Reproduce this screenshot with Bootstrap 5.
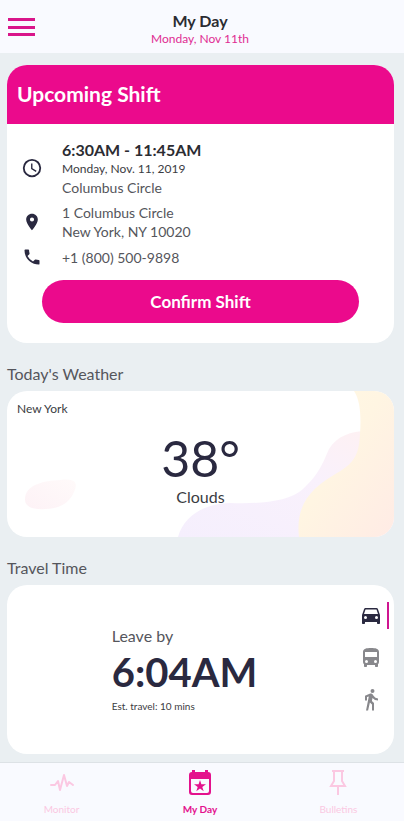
<!DOCTYPE html>
<html lang="en">
<head>
<meta charset="utf-8">
<meta name="viewport" content="width=device-width, initial-scale=1">
<title>My Day</title>
<link href="https://cdn.jsdelivr.net/npm/bootstrap@5.3.0/dist/css/bootstrap.min.css" rel="stylesheet">
<style>
:root { --pink: #eb0a8c; --ink: #2a2940; --panel: #f9faff; }
body { font-family: Lato, "Open Sans", sans-serif; background: #eaeff2; color: #55565c; font-size: 14px; line-height: 19px; }
h1, h2, p { margin: 0; font-size: inherit; line-height: inherit; }
svg { display: block; flex: none; }
.topbar { display: grid; grid-template-columns: 44px 1fr 44px; background: var(--panel); height: 53px; padding-right: 4px; }
.topbar h1 { font-size: 16px; line-height: 20px; font-weight: 700; color: #2b2c32; }
.topbar p { font-size: 12px; line-height: 16px; color: #e02c92; }
.day-title { padding-top: 11px; }
.menu-btn { padding: 0 0 0 8px; }
.content { padding: 12px 10px 8px 7px; }
.tile { border: 0; border-radius: 20px; overflow: hidden; background: #fff; }
.shift-head { background: var(--pink); padding: 19px 10px 20px; font-size: 21px; line-height: 20px; font-weight: 700; color: #fff; }
.shift-body { padding: 16px 15px 20px; gap: 6px; }
.info { display: grid; grid-template-columns: 20px 1fr; column-gap: 20px; align-items: center; color: var(--ink); }
.info > svg { justify-self: center; }
.info-text { color: #55565c; }
.hours { font-size: 16px; line-height: 20px; font-weight: 700; color: #2b2c32; }
.shift-date { font-size: 12px; line-height: 18px; color: #3b3c42; }
.confirm { margin: 7px 20px 0; height: 43px; background: var(--pink); color: #fff; border: 0; border-radius: 22px; font-size: 17px; font-weight: 700; }
.section-title { font-size: 16px; line-height: 20px; font-weight: 400; color: #55565c; margin: 21px 0 7px; }
.weather { height: 146px; }
.weather-art { position: absolute; inset: 0; width: 100%; height: 100%; }
.weather-text { position: relative; padding: 9px 10px; }
.city { font-size: 12px; line-height: 18px; color: #3b3c42; }
.temp { font-size: 50px; line-height: 60px; color: var(--ink); margin-top: 10px; }
.sky { font-size: 16px; line-height: 18px; color: #3b3c42; }
.travel { min-height: 169px; }
.leave-box { margin-right: 32px; }
.leave { font-size: 16px; line-height: 20px; }
.leave-time { font-size: 40px; line-height: 52px; font-weight: 700; color: var(--ink); }
.estimate { font-size: 10px; line-height: 16px; color: #3b3c42; }
.modes { position: absolute; top: 17px; right: 5px; gap: 15px; }
.mode { display: flex; align-items: center; padding: 0 6px 0 0; height: 27px; border: 0; border-right: 2px solid transparent; background: none; color: #88888c; }
.mode.active { border-right-color: #cf1590; color: var(--ink); }
.tabs { display: grid; grid-template-columns: 4fr 5fr 4fr; background: var(--panel); border-top: 1px solid #dde2e6; height: 59px; padding-right: 4px; }
.tab { display: flex; flex-direction: column; align-items: center; padding-top: 6px; font-size: 10px; line-height: 14px; color: #fbc8e2; text-decoration: none; }
.tab svg { margin-bottom: 5px; }
.tab.current { color: #e4118d; font-weight: 700; }
</style>
</head>
<body>
<div class="d-flex flex-column min-vh-100">
  <header class="topbar sticky-top">
    <button class="menu-btn btn border-0" type="button" aria-label="Menu">
      <svg width="27" height="20" viewBox="0 0 27 20" fill="#d9158a"><path d="M0 1h27v3H0zM0 9h27v3H0zM0 16h27v3H0z"/></svg>
    </button>
    <div class="day-title text-center">
      <h1>My Day</h1>
      <p>Monday, Nov 11th</p>
    </div>
  </header>

  <main class="content">
    <section class="tile card">
      <h2 class="shift-head">Upcoming Shift</h2>
      <div class="shift-body d-flex flex-column">
        <div class="info">
          <svg width="22" height="22" viewBox="0 1 24 24" fill="currentColor"><path d="M12 2a10 10 0 1 0 0 20 10 10 0 0 0 0-20zm0 18a8 8 0 1 1 0-16 8 8 0 0 1 0 16zm.5-13H11v6l5.200 3.200.8-1.300-4.500-2.700z"/></svg>
          <div class="info-text">
            <p class="hours">6:30AM - 11:45AM</p>
            <p class="shift-date">Monday, Nov. 11, 2019</p>
            <p>Columbus Circle</p>
          </div>
        </div>
        <div class="info">
          <svg width="20" height="20" viewBox="0 0 24 24" fill="currentColor"><path d="M12 2C8.100 2 5 5.100 5 9c0 5.250 7 13 7 13s7-7.750 7-13c0-3.900-3.100-7-7-7zm0 9.500a2.500 2.500 0 1 1 0-5 2.500 2.500 0 0 1 0 5z"/></svg>
          <address class="info-text m-0">1 Columbus Circle<br>New York, NY 10020</address>
        </div>
        <div class="info">
          <svg width="20" height="20" viewBox="0 0 24 24" fill="currentColor"><path d="M20 15.500c-1.250 0-2.450-.2-3.570-.57a1 1 0 0 0-1.020.24l-2.200 2.200a15.050 15.050 0 0 1-6.590-6.580l2.200-2.210a1 1 0 0 0 .25-1.010A11.400 11.400 0 0 1 8.500 4a1 1 0 0 0-1-1H4a1 1 0 0 0-1 1c0 9.390 7.610 17 17 17a1 1 0 0 0 1-1v-3.500a1 1 0 0 0-1-1z"/></svg>
          <a class="info-text text-decoration-none" href="tel:+18005009898">+1 (800) 500-9898</a>
        </div>
        <button class="confirm btn" type="button">Confirm Shift</button>
      </div>
    </section>

    <h2 class="section-title">Today's Weather</h2>
    <section class="tile card weather">
      <svg class="weather-art" viewBox="0 0 387 146" preserveAspectRatio="none" aria-hidden="true">
        <defs>
          <linearGradient id="warm" x1="0" y1="0" x2="1" y2="1"><stop offset="0" stop-color="#fff9e4"/><stop offset=".45" stop-color="#fff5e2"/><stop offset="1" stop-color="#ffebe5"/></linearGradient>
          <linearGradient id="lilac" x1="0" y1="1" x2="1" y2="0"><stop offset="0" stop-color="#f5effd"/><stop offset=".6" stop-color="#f9f1fc"/><stop offset="1" stop-color="#fff1f1"/></linearGradient>
          <linearGradient id="blush" x1="0" y1="1" x2="1" y2="0"><stop offset="0" stop-color="#fdf2f6"/><stop offset="1" stop-color="#fffafa"/></linearGradient>
        </defs>
        <path fill="url(#lilac)" d="M171 146C177 125 196 113 223 112C252 113 282 111 296 98C312 83 316 72 322 58C330 45 344 40 360 40L387 40V146Z"/>
        <path fill="url(#warm)" d="M347 0C354 10 354 29 353 43C352 60 350 71 330 82C306 96 288 112 292 146H387V0Z"/>
        <path fill="url(#blush)" d="M18 109C18 93 37 90 53 89C67 87 72 91 67 101C62 113 51 118 38 118C27 119 18 116 18 109Z"/>
      </svg>
      <div class="weather-text">
        <p class="city">New York</p>
        <div class="text-center">
          <p class="temp">38°</p>
          <p class="sky">Clouds</p>
        </div>
      </div>
    </section>

    <h2 class="section-title">Travel Time</h2>
    <section class="tile card travel justify-content-center align-items-center">
      <div class="leave-box">
        <p class="leave">Leave by</p>
        <p class="leave-time">6:04AM</p>
        <p class="estimate">Est. travel: 10 mins</p>
      </div>
      <div class="modes d-flex flex-column">
        <button class="mode active" type="button" aria-label="Car"><svg width="20" height="20" viewBox="2 3 20 20" fill="currentColor"><path d="M18.920 6c-.2-.58-.76-1-1.420-1h-11c-.66 0-1.210.42-1.420 1L3 12v8c0 .6.4 1 1 1h1c.6 0 1-.4 1-1v-1h12v1c0 .6.4 1 1 1h1c.6 0 1-.4 1-1v-8zM6.500 16a1.500 1.500 0 1 1 0-3 1.500 1.500 0 0 1 0 3zm11 0a1.500 1.500 0 1 1 0-3 1.500 1.500 0 0 1 0 3zM5 11l1.500-4.500h11L19 11z"/></svg></button>
        <button class="mode" type="button" aria-label="Bus"><svg width="20" height="22" viewBox="2 1 20 22" fill="currentColor"><path d="M4 16c0 .9.4 1.700 1 2.200V20c0 .6.4 1 1 1h1c.6 0 1-.4 1-1v-1h8v1c0 .6.4 1 1 1h1c.6 0 1-.4 1-1v-1.800c.6-.5 1-1.300 1-2.200V6c0-3.500-3.600-4-8-4s-8 .5-8 4zm3.500 1a1.500 1.500 0 1 1 0-3 1.500 1.500 0 0 1 0 3zm9 0a1.500 1.500 0 1 1 0-3 1.500 1.500 0 0 1 0 3zM6 11V6h12v5z"/></svg></button>
        <button class="mode" type="button" aria-label="Walk"><svg width="20" height="25" viewBox="2 0 20 24" fill="currentColor"><path d="M13.500 5.500a2 2 0 1 0 0-4 2 2 0 0 0 0 4zM9.800 8.900 7 23h2.100l1.800-8 2.100 2v6h2v-7.500l-2.100-2 .6-3A7.300 7.300 0 0 0 19 13v-2a5 5 0 0 1-4.300-2.400l-1-1.600c-.4-.6-1-1-1.700-1-.3 0-.5.1-.8.1L6 8.300V13h2V9.600z"/></svg></button>
      </div>
    </section>
  </main>

  <nav class="tabs sticky-bottom mt-auto" aria-label="Main">
    <a class="tab" href="#monitor"><svg width="24" height="28" viewBox="0 0 24 28" fill="none" stroke="currentColor" stroke-width="2" stroke-linejoin="round" stroke-linecap="round"><path d="M1 16h4l3-4 2 9 4-15 3 11 2-4 4 3"/></svg>Monitor</a>
    <a class="tab current" href="#day" aria-current="page"><svg width="24" height="28" viewBox="0 0 24 28"><path fill="currentColor" fill-rule="evenodd" d="M4 1h3v2h10V1h3v2a3 3 0 0 1 3 3v17a3 3 0 0 1-3 3H4a3 3 0 0 1-3-3V6a3 3 0 0 1 3-3zM3 10v12q0 2 2 2h14q2 0 2-2V10z"/><path fill="currentColor" d="m12 11 1.400 4.300h4.600l-3.700 2.700 1.400 4.300-3.700-2.700-3.700 2.700L9.700 18 6 15.300h4.600z"/></svg>My Day</a>
    <a class="tab" href="#bulletins"><svg width="24" height="28" viewBox="0 0 24 28" fill="none" stroke="currentColor" stroke-width="2"><path d="M6 2h12M8 2v10l-3 5h14l-3-5V2M12 17v9"/></svg>Bulletins</a>
  </nav>
</div>
<script src="https://cdn.jsdelivr.net/npm/bootstrap@5.3.0/dist/js/bootstrap.bundle.min.js"></script>
</body>
</html>
